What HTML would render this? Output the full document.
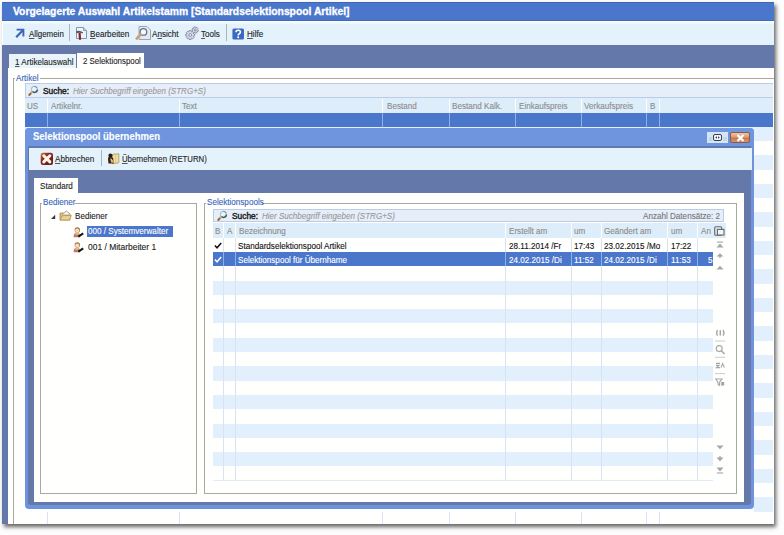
<!DOCTYPE html>
<html><head><meta charset="utf-8"><style>
html,body{margin:0;padding:0;}
body{width:784px;height:535px;overflow:hidden;position:relative;background:#fdfdfd;font-family:"Liberation Sans",sans-serif;}
.a{position:absolute;}
.t{position:absolute;white-space:nowrap;line-height:1;transform-origin:0 0;-webkit-text-stroke:0.12px currentColor;}
u{text-decoration:underline;text-decoration-color:#555;text-underline-offset:1px;}
</style></head><body>
<div class="a" style="left:2px;top:1.6px;width:771.5px;height:522.1px;background:#fffffe;box-shadow:2px 3px 4px rgba(0,0,0,.6);"></div>
<div class="a" style="left:2px;top:1.8px;width:771.5px;height:18.8px;background:#4a77cc;border-top:1px solid #3f66b8;border-bottom:1px solid #4069b8;box-sizing:border-box;"></div>
<div class="t" style="left:13.3px;top:7px;font-size:10px;transform:scaleX(1.032);color:#fff;font-weight:bold;-webkit-text-stroke:0.3px #fff;">Vorgelagerte Auswahl Artikelstamm [Standardselektionspool Artikel]</div>
<div class="a" style="left:2.5px;top:20.6px;width:771.0px;height:24.4px;background:linear-gradient(#fbfdff 0px,#f4fafe 1.5px,#e4f2fc 3.5px);"></div>
<div class="a" style="left:69.4px;top:24px;width:1.0px;height:17px;background:#a9b6c2;"></div>
<div class="a" style="left:226.1px;top:24px;width:1.0px;height:17px;background:#a9b6c2;"></div>
<div class="t" style="left:29.1px;top:30px;font-size:9px;transform:scaleX(0.88);color:#222;"><u>A</u>llgemein</div>
<div class="t" style="left:90.4px;top:30px;font-size:9px;transform:scaleX(0.9);color:#222;"><u>B</u>earbeiten</div>
<div class="t" style="left:152.2px;top:30px;font-size:9px;transform:scaleX(0.9);color:#222;">A<u>n</u>sicht</div>
<div class="t" style="left:200.6px;top:30px;font-size:9px;transform:scaleX(0.9);color:#222;"><u>T</u>ools</div>
<div class="t" style="left:247px;top:30px;font-size:9px;transform:scaleX(0.9);color:#222;"><u>H</u>ilfe</div>
<div class="a" style="left:2px;top:45px;width:771.5px;height:478.7px;background:#6479aa;"></div>
<div class="a" style="left:9.2px;top:54px;width:67.3px;height:14px;background:#e9f4fb;"></div>
<div class="a" style="left:76.5px;top:52.6px;width:67.9px;height:15.4px;background:#fffffe;"></div>
<div class="t" style="left:14.9px;top:58px;font-size:9px;transform:scaleX(0.9);color:#1e1e1e;"><u>1</u> Artikelauswahl</div>
<div class="t" style="left:82.6px;top:57px;font-size:9px;transform:scaleX(0.875);color:#1e1e1e;">2 Selektionspool</div>
<div class="a" style="left:8px;top:67.9px;width:765.5px;height:455.8px;background:#fffffe;"></div>
<div class="a" style="left:13px;top:78.4px;width:760.5px;height:1.0px;background:#aaa89e;"></div>
<div class="a" style="left:13px;top:78.4px;width:1px;height:445.3px;background:#aaa89e;"></div>
<div class="a" style="left:15px;top:73px;width:25px;height:9px;background:#fffffe;"></div>
<div class="t" style="left:16.3px;top:74px;font-size:9px;transform:scaleX(0.9);color:#3a64b8;">Artikel</div>
<div class="a" style="left:24.9px;top:83.4px;width:748.6px;height:14.2px;background:#e6eef9;border:1px solid #bccbe6;border-right:none;box-sizing:border-box;"></div>
<div class="t" style="left:43px;top:87px;font-size:9px;transform:scaleX(0.93);color:#222;-webkit-text-stroke:0.45px #222;">Suche:</div>
<div class="t" style="left:73.3px;top:87px;font-size:9px;transform:scaleX(0.893);color:#999;font-style:italic;">Hier Suchbegriff eingeben (STRG+S)</div>
<div class="a" style="left:24.9px;top:97.5px;width:748.6px;height:15.0px;background:#ddedfa;"></div>
<div class="a" style="left:46.8px;top:98.5px;width:1.0px;height:13.0px;background:#fdfeff;"></div>
<div class="a" style="left:179px;top:98.5px;width:1px;height:13.0px;background:#fdfeff;"></div>
<div class="a" style="left:382.2px;top:98.5px;width:1.0px;height:13.0px;background:#fdfeff;"></div>
<div class="a" style="left:448.5px;top:98.5px;width:1.0px;height:13.0px;background:#fdfeff;"></div>
<div class="a" style="left:514.7px;top:98.5px;width:1.0px;height:13.0px;background:#fdfeff;"></div>
<div class="a" style="left:581.2px;top:98.5px;width:1.0px;height:13.0px;background:#fdfeff;"></div>
<div class="a" style="left:646.3px;top:98.5px;width:1.0px;height:13.0px;background:#fdfeff;"></div>
<div class="a" style="left:659px;top:98.5px;width:1px;height:13.0px;background:#fdfeff;"></div>
<div class="t" style="left:26.9px;top:102px;font-size:9px;transform:scaleX(0.9);color:#8c8c8c;">US</div>
<div class="t" style="left:51.4px;top:102px;font-size:9px;transform:scaleX(0.9);color:#8c8c8c;">Artikelnr.</div>
<div class="t" style="left:182px;top:102px;font-size:9px;transform:scaleX(0.9);color:#8c8c8c;">Text</div>
<div class="t" style="left:386.5px;top:102px;font-size:9px;transform:scaleX(0.9);color:#8c8c8c;">Bestand</div>
<div class="t" style="left:452.3px;top:102px;font-size:9px;transform:scaleX(0.9);color:#8c8c8c;">Bestand Kalk.</div>
<div class="t" style="left:518.5px;top:102px;font-size:9px;transform:scaleX(0.9);color:#8c8c8c;">Einkaufspreis</div>
<div class="t" style="left:584.3px;top:102px;font-size:9px;transform:scaleX(0.9);color:#8c8c8c;">Verkaufspreis</div>
<div class="t" style="left:650px;top:102px;font-size:9px;transform:scaleX(0.9);color:#8c8c8c;">B</div>
<div class="a" style="left:24.9px;top:112.5px;width:748.6px;height:14.25px;background:#4a76cb;"></div>
<div class="a" style="left:24.9px;top:126.75px;width:748.6px;height:14.25px;background:#e2effc;"></div>
<div class="a" style="left:24.9px;top:155.25px;width:748.6px;height:14.25px;background:#e2effc;"></div>
<div class="a" style="left:24.9px;top:183.75px;width:748.6px;height:14.25px;background:#e2effc;"></div>
<div class="a" style="left:24.9px;top:212.25px;width:748.6px;height:14.25px;background:#e2effc;"></div>
<div class="a" style="left:24.9px;top:240.75px;width:748.6px;height:14.25px;background:#e2effc;"></div>
<div class="a" style="left:24.9px;top:269.25px;width:748.6px;height:14.25px;background:#e2effc;"></div>
<div class="a" style="left:24.9px;top:297.75px;width:748.6px;height:14.25px;background:#e2effc;"></div>
<div class="a" style="left:24.9px;top:326.25px;width:748.6px;height:14.25px;background:#e2effc;"></div>
<div class="a" style="left:24.9px;top:354.75px;width:748.6px;height:14.25px;background:#e2effc;"></div>
<div class="a" style="left:24.9px;top:383.25px;width:748.6px;height:14.25px;background:#e2effc;"></div>
<div class="a" style="left:24.9px;top:411.75px;width:748.6px;height:14.25px;background:#e2effc;"></div>
<div class="a" style="left:24.9px;top:440.25px;width:748.6px;height:14.25px;background:#e2effc;"></div>
<div class="a" style="left:24.9px;top:468.75px;width:748.6px;height:14.25px;background:#e2effc;"></div>
<div class="a" style="left:24.9px;top:497.25px;width:748.6px;height:14.25px;background:#e2effc;"></div>
<div class="a" style="left:46.8px;top:112.5px;width:1.0px;height:411.2px;background:#d9e3f6;"></div>
<div class="a" style="left:179px;top:112.5px;width:1px;height:411.2px;background:#d9e3f6;"></div>
<div class="a" style="left:382.2px;top:112.5px;width:1.0px;height:411.2px;background:#d9e3f6;"></div>
<div class="a" style="left:448.5px;top:112.5px;width:1.0px;height:411.2px;background:#d9e3f6;"></div>
<div class="a" style="left:514.7px;top:112.5px;width:1.0px;height:411.2px;background:#d9e3f6;"></div>
<div class="a" style="left:581.2px;top:112.5px;width:1.0px;height:411.2px;background:#d9e3f6;"></div>
<div class="a" style="left:646.3px;top:112.5px;width:1.0px;height:411.2px;background:#d9e3f6;"></div>
<div class="a" style="left:659px;top:112.5px;width:1px;height:411.2px;background:#d9e3f6;"></div>
<div class="a" style="left:46.8px;top:112.5px;width:1.0px;height:14.25px;background:#8fb0e6;"></div>
<div class="a" style="left:179px;top:112.5px;width:1px;height:14.25px;background:#8fb0e6;"></div>
<div class="a" style="left:382.2px;top:112.5px;width:1.0px;height:14.25px;background:#8fb0e6;"></div>
<div class="a" style="left:448.5px;top:112.5px;width:1.0px;height:14.25px;background:#8fb0e6;"></div>
<div class="a" style="left:514.7px;top:112.5px;width:1.0px;height:14.25px;background:#8fb0e6;"></div>
<div class="a" style="left:581.2px;top:112.5px;width:1.0px;height:14.25px;background:#8fb0e6;"></div>
<div class="a" style="left:646.3px;top:112.5px;width:1.0px;height:14.25px;background:#8fb0e6;"></div>
<div class="a" style="left:659px;top:112.5px;width:1px;height:14.25px;background:#8fb0e6;"></div>
<div class="a" style="left:24.7px;top:505px;width:729.7px;height:6.6px;background:#fbfdff;"></div>
<div class="a" style="left:24.7px;top:127.6px;width:729.7px;height:381.2px;background:#6f93da;border-radius:4px;"></div>
<div class="a" style="left:27.5px;top:147px;width:723.5px;height:357.8px;background:#6479aa;border-radius:0 0 3px 3px;"></div>
<div class="a" style="left:24.7px;top:127.6px;width:729.7px;height:19.4px;background:rgba(110,150,222,.93);border-radius:4px 4px 0 0;"></div>
<div class="a" style="left:27.5px;top:146.1px;width:723.5px;height:1.9px;background:#6378b0;"></div>
<div class="t" style="left:33px;top:132px;font-size:10px;transform:scaleX(0.948);color:#fff;font-weight:bold;">Selektionspool übernehmen</div>
<div class="a" style="left:707.3px;top:132px;width:20.6px;height:11.4px;background:#d4e5f7;"></div>
<div class="a" style="left:712.6px;top:134.3px;width:9.8px;height:6.9px;border:1.4px solid #35404e;border-radius:2px;box-sizing:border-box;background:#f2f6fa;"></div>
<svg class="a" style="left:715px;top:136.3px" width="5" height="3" viewBox="0 0 5 3"><path d="M0.2 1.5 L2 0.2 V2.8 Z M4.8 1.5 L3 0.2 V2.8 Z" fill="#35404e"/></svg>
<div class="a" style="left:708.5px;top:136.5px;width:3.5px;height:4.5px;background:#b8d0c8;opacity:.6;"></div>
<div class="a" style="left:723px;top:136.5px;width:3.5px;height:4.5px;background:#b8d0c8;opacity:.6;"></div>
<div class="a" style="left:729.8px;top:132.3px;width:20.7px;height:11.1px;background:linear-gradient(#f2c6a4,#dc9a6c 45%,#c47a4a 60%,#d89470);border:1px solid #8a5a52;border-radius:2px;box-sizing:border-box;"></div>
<svg class="a" style="left:736px;top:134px" width="9" height="8" viewBox="0 0 9 8"><path d="M1.5 1 L7.5 7 M7.5 1 L1.5 7" stroke="#fff" stroke-width="2.2"/></svg>
<div class="a" style="left:29px;top:148.3px;width:722.8px;height:21.7px;background:#e4f2fc;"></div>
<div class="a" style="left:100.9px;top:150px;width:1.0px;height:15.6px;background:#a9b6c2;"></div>
<div class="t" style="left:55.3px;top:155px;font-size:9px;transform:scaleX(0.9);color:#1e1e1e;"><u>A</u>bbrechen</div>
<div class="t" style="left:121.7px;top:155px;font-size:9px;transform:scaleX(0.865);color:#1e1e1e;"><u>Ü</u>bernehmen (RETURN)</div>
<div class="a" style="left:34px;top:178px;width:44px;height:15px;background:#fffffe;"></div>
<div class="t" style="left:39.9px;top:182px;font-size:9px;transform:scaleX(0.9);color:#1e1e1e;">Standard</div>
<div class="a" style="left:33.9px;top:192.9px;width:710.3px;height:309.1px;background:#fffffe;"></div>
<div class="a" style="left:40.2px;top:202.7px;width:156.4px;height:291.3px;border:1px solid #aaa89e;box-sizing:border-box;"></div>
<div class="a" style="left:42px;top:197px;width:33px;height:9px;background:#fffffe;"></div>
<div class="t" style="left:43px;top:198px;font-size:9px;transform:scaleX(0.9);color:#3a64b8;">Bediener</div>
<div class="t" style="left:75px;top:212px;font-size:9px;transform:scaleX(0.9);color:#1e1e1e;">Bediener</div>
<div class="a" style="left:86.8px;top:225.8px;width:86.4px;height:10.8px;background:#4a76cb;"></div>
<div class="t" style="left:88px;top:227px;font-size:9px;transform:scaleX(0.9);color:#fff;">000 / Systemverwalter</div>
<div class="t" style="left:88px;top:243px;font-size:9px;transform:scaleX(0.94);color:#222;">001 / Mitarbeiter 1</div>
<div class="a" style="left:204px;top:202.9px;width:533.2px;height:290.8px;border:1px solid #aaa89e;box-sizing:border-box;"></div>
<div class="a" style="left:206px;top:197px;width:56px;height:9px;background:#fffffe;"></div>
<div class="t" style="left:207px;top:198px;font-size:9px;transform:scaleX(0.9);color:#3a64b8;">Selektionspools</div>
<div class="a" style="left:213.2px;top:208.9px;width:511.3px;height:13.6px;background:#e6eef9;border:1px solid #bccbe6;box-sizing:border-box;"></div>
<div class="t" style="left:231.6px;top:212px;font-size:9px;transform:scaleX(0.93);color:#222;-webkit-text-stroke:0.45px #222;">Suche:</div>
<div class="t" style="left:262px;top:212px;font-size:9px;transform:scaleX(0.893);color:#999;font-style:italic;">Hier Suchbegriff eingeben (STRG+S)</div>
<div class="t" style="left:643px;top:212px;font-size:9px;transform:scaleX(0.9);color:#777;">Anzahl Datensätze: 2</div>
<div class="a" style="left:213.2px;top:222.5px;width:512.8px;height:15.1px;background:#ddedfa;"></div>
<div class="a" style="left:223.3px;top:222.5px;width:1.0px;height:15.1px;background:#fdfeff;"></div>
<div class="a" style="left:235.3px;top:222.5px;width:1.0px;height:15.1px;background:#fdfeff;"></div>
<div class="a" style="left:505.4px;top:222.5px;width:1.0px;height:15.1px;background:#fdfeff;"></div>
<div class="a" style="left:571.4px;top:222.5px;width:1.0px;height:15.1px;background:#fdfeff;"></div>
<div class="a" style="left:601.4px;top:222.5px;width:1.0px;height:15.1px;background:#fdfeff;"></div>
<div class="a" style="left:667.3px;top:222.5px;width:1.0px;height:15.1px;background:#fdfeff;"></div>
<div class="a" style="left:697.4px;top:222.5px;width:1.0px;height:15.1px;background:#fdfeff;"></div>
<div class="t" style="left:214.9px;top:227px;font-size:9px;transform:scaleX(0.9);color:#8c8c8c;">B</div>
<div class="t" style="left:227.1px;top:227px;font-size:9px;transform:scaleX(0.9);color:#8c8c8c;">A</div>
<div class="t" style="left:238.8px;top:227px;font-size:9px;transform:scaleX(0.9);color:#8c8c8c;">Bezeichnung</div>
<div class="t" style="left:508.6px;top:227px;font-size:9px;transform:scaleX(0.9);color:#8c8c8c;">Erstellt am</div>
<div class="t" style="left:574.3px;top:227px;font-size:9px;transform:scaleX(0.9);color:#8c8c8c;">um</div>
<div class="t" style="left:604px;top:227px;font-size:9px;transform:scaleX(0.9);color:#8c8c8c;">Geändert am</div>
<div class="t" style="left:670.6px;top:227px;font-size:9px;transform:scaleX(0.9);color:#8c8c8c;">um</div>
<div class="t" style="left:701.3px;top:227px;font-size:9px;transform:scaleX(0.9);color:#8c8c8c;">An</div>
<div class="a" style="left:213.2px;top:251.9px;width:500.0px;height:14.3px;background:#4a76cb;"></div>
<div class="a" style="left:213.2px;top:280.5px;width:500.0px;height:14.3px;background:#e2effc;"></div>
<div class="a" style="left:213.2px;top:309.1px;width:500.0px;height:14.3px;background:#e2effc;"></div>
<div class="a" style="left:213.2px;top:337.7px;width:500.0px;height:14.3px;background:#e2effc;"></div>
<div class="a" style="left:213.2px;top:366.3px;width:500.0px;height:14.3px;background:#e2effc;"></div>
<div class="a" style="left:213.2px;top:394.9px;width:500.0px;height:14.3px;background:#e2effc;"></div>
<div class="a" style="left:213.2px;top:423.5px;width:500.0px;height:14.3px;background:#e2effc;"></div>
<div class="a" style="left:213.2px;top:452.1px;width:500.0px;height:14.3px;background:#e2effc;"></div>
<div class="a" style="left:223.3px;top:237.6px;width:1.0px;height:243.1px;background:#d9e3f6;"></div>
<div class="a" style="left:235.3px;top:237.6px;width:1.0px;height:243.1px;background:#d9e3f6;"></div>
<div class="a" style="left:505.4px;top:237.6px;width:1.0px;height:243.1px;background:#d9e3f6;"></div>
<div class="a" style="left:571.4px;top:237.6px;width:1.0px;height:243.1px;background:#d9e3f6;"></div>
<div class="a" style="left:601.4px;top:237.6px;width:1.0px;height:243.1px;background:#d9e3f6;"></div>
<div class="a" style="left:667.3px;top:237.6px;width:1.0px;height:243.1px;background:#d9e3f6;"></div>
<div class="a" style="left:697.4px;top:237.6px;width:1.0px;height:243.1px;background:#d9e3f6;"></div>
<div class="a" style="left:223.3px;top:251.9px;width:1.0px;height:14.3px;background:#8fb0e6;"></div>
<div class="a" style="left:235.3px;top:251.9px;width:1.0px;height:14.3px;background:#8fb0e6;"></div>
<div class="a" style="left:505.4px;top:251.9px;width:1.0px;height:14.3px;background:#8fb0e6;"></div>
<div class="a" style="left:571.4px;top:251.9px;width:1.0px;height:14.3px;background:#8fb0e6;"></div>
<div class="a" style="left:601.4px;top:251.9px;width:1.0px;height:14.3px;background:#8fb0e6;"></div>
<div class="a" style="left:667.3px;top:251.9px;width:1.0px;height:14.3px;background:#8fb0e6;"></div>
<div class="a" style="left:697.4px;top:251.9px;width:1.0px;height:14.3px;background:#8fb0e6;"></div>
<div class="a" style="left:213.2px;top:480.1px;width:500.0px;height:1.0px;background:#e4eaf6;"></div>
<div class="t" style="left:237.7px;top:242px;font-size:9px;transform:scaleX(0.9);color:#111;">Standardselektionspool Artikel</div>
<div class="t" style="left:508.6px;top:242px;font-size:9px;transform:scaleX(0.9);color:#111;">28.11.2014 /Fr</div>
<div class="t" style="left:574.3px;top:242px;font-size:9px;transform:scaleX(0.9);color:#111;">17:43</div>
<div class="t" style="left:604px;top:242px;font-size:9px;transform:scaleX(0.9);color:#111;">23.02.2015 /Mo</div>
<div class="t" style="left:670.6px;top:242px;font-size:9px;transform:scaleX(0.9);color:#111;">17:22</div>
<div class="t" style="left:237.7px;top:256px;font-size:9px;transform:scaleX(0.9);color:#fff;">Selektionspool für Übernhame</div>
<div class="t" style="left:508.6px;top:256px;font-size:9px;transform:scaleX(0.9);color:#fff;">24.02.2015 /Di</div>
<div class="t" style="left:574.3px;top:256px;font-size:9px;transform:scaleX(0.9);color:#fff;">11:52</div>
<div class="t" style="left:604px;top:256px;font-size:9px;transform:scaleX(0.9);color:#fff;">24.02.2015 /Di</div>
<div class="t" style="left:670.6px;top:256px;font-size:9px;transform:scaleX(0.9);color:#fff;">11:53</div>
<div class="t" style="left:707.6px;top:256px;font-size:9px;transform:scaleX(0.9);color:#fff;">5</div>
<svg class="a" style="left:14px;top:28px" width="11" height="11" viewBox="0 0 11 11"><path d="M2.2 9.2 L8.6 2.6" stroke="#3b63ba" stroke-width="2.2" fill="none"/><path d="M2.6 1.6 H9.4 V8.6" stroke="#3b63ba" stroke-width="1.9" fill="none"/></svg>
<svg class="a" style="left:74px;top:26px" width="14" height="15" viewBox="0 0 14 15"><path d="M2.5 1.5 H9.5 L12.5 4.5 V12.5 H2.5 Z" fill="#eef2fa" stroke="#8594ab" stroke-width="1"/><path d="M9.5 1.5 V4.5 H12.5" fill="#c5cfdd" stroke="#8594ab" stroke-width="0.8"/><path d="M2.2 5.2 Q5.5 3.8 9 6.2 L8.6 7.4 Q6 6.2 2.4 7.2 Z" fill="#505a66"/><path d="M5.6 7 L6 13.8" stroke="#8a1e22" stroke-width="2.2"/></svg>
<svg class="a" style="left:134px;top:25px" width="18" height="16" viewBox="0 0 18 16"><path d="M5 1.5 H13 L16.5 5 V14.5 H5 Z" fill="#e3e9f3" stroke="#9aa6b8" stroke-width="1"/><circle cx="9.4" cy="6.9" r="3.3" fill="#f4f8ff" stroke="#6a7280" stroke-width="1.3"/><path d="M2.8 13.4 L6.4 9.8" stroke="#caa27a" stroke-width="2.8" stroke-linecap="round"/></svg>
<svg class="a" style="left:184px;top:25px" width="16" height="16" viewBox="0 0 16 16"><path d="M9.36 8.75 L10.71 9.08 L10.71 10.92 L9.36 11.25 L9.32 11.35 L10.04 12.54 L8.74 13.84 L7.55 13.12 L7.45 13.16 L7.12 14.51 L5.28 14.51 L4.95 13.16 L4.85 13.12 L3.66 13.84 L2.36 12.54 L3.08 11.35 L3.04 11.25 L1.69 10.92 L1.69 9.08 L3.04 8.75 L3.08 8.65 L2.36 7.46 L3.66 6.16 L4.85 6.88 L4.95 6.84 L5.28 5.49 L7.12 5.49 L7.45 6.84 L7.55 6.88 L8.74 6.16 L10.04 7.46 L9.32 8.65 Z M7.6 10 A1.4 1.4 0 1 0 4.8 10 A1.4 1.4 0 1 0 7.6 10 Z" fill="#d5d6ea" stroke="#7d8098" stroke-width="0.8" fill-rule="evenodd"/><path d="M13.45 4.54 L14.40 5.10 L13.90 6.72 L12.80 6.65 L12.73 6.72 L12.71 7.82 L11.06 8.20 L10.57 7.21 L10.47 7.18 L9.51 7.72 L8.36 6.48 L8.97 5.56 L8.95 5.46 L8.00 4.90 L8.50 3.28 L9.60 3.35 L9.67 3.28 L9.69 2.18 L11.34 1.80 L11.83 2.79 L11.93 2.82 L12.89 2.28 L14.04 3.52 L13.43 4.44 Z M12.2 5 A1 1 0 1 0 10.2 5 A1 1 0 1 0 12.2 5 Z" fill="#d9dbee" stroke="#7d8098" stroke-width="0.8" fill-rule="evenodd"/></svg>
<svg class="a" style="left:232px;top:27.5px" width="12.5" height="12" viewBox="0 0 12.5 12"><rect x="0.4" y="0.4" width="11.6" height="11" rx="1.5" fill="#3e69c1"/><path d="M4 4.2 Q4 2.2 6.2 2.2 Q8.4 2.2 8.4 4.1 Q8.4 5.3 7 6 Q6.2 6.4 6.2 7.6" stroke="#fff" stroke-width="1.6" fill="none"/><rect x="5.3" y="8.4" width="1.8" height="1.7" fill="#fff"/></svg>
<svg class="a" style="left:27px;top:83.6px" width="12" height="13" viewBox="0 0 12 13"><circle cx="7.4" cy="5.4" r="3" fill="#e2f6fc" stroke="#a8c4d4" stroke-width="1.1"/><path d="M10.4 5.4 A3 3 0 0 1 5.3 7.5" stroke="#4a525c" stroke-width="1.5" fill="none"/><path d="M10.1 4 A3 3 0 0 0 7.4 2.4" stroke="#7a8896" stroke-width="1" fill="none"/><path d="M2.2 10.8 L4.6 8.4" stroke="#c8ae7a" stroke-width="2.4" stroke-linecap="round"/><path d="M2.4 11 L3.6 9.8" stroke="#8a5a4a" stroke-width="1.6" stroke-linecap="round"/></svg>
<svg class="a" style="left:215.5px;top:209.4px" width="12" height="13" viewBox="0 0 12 13"><circle cx="7.4" cy="5.4" r="3" fill="#e2f6fc" stroke="#a8c4d4" stroke-width="1.1"/><path d="M10.4 5.4 A3 3 0 0 1 5.3 7.5" stroke="#4a525c" stroke-width="1.5" fill="none"/><path d="M10.1 4 A3 3 0 0 0 7.4 2.4" stroke="#7a8896" stroke-width="1" fill="none"/><path d="M2.2 10.8 L4.6 8.4" stroke="#c8ae7a" stroke-width="2.4" stroke-linecap="round"/><path d="M2.4 11 L3.6 9.8" stroke="#8a5a4a" stroke-width="1.6" stroke-linecap="round"/></svg>
<svg class="a" style="left:39.5px;top:151.5px" width="14" height="14" viewBox="0 0 14 14"><defs><linearGradient id="xg" x1="0" y1="0" x2="1" y2="1"><stop offset="0" stop-color="#c8864c"/><stop offset="0.35" stop-color="#8a2a22"/><stop offset="1" stop-color="#6e1016"/></linearGradient></defs><rect x="0.7" y="0.7" width="12.3" height="12.3" rx="2.2" fill="url(#xg)"/><path d="M3.8 3.8 L9.9 9.9 M9.9 3.8 L3.8 9.9" stroke="#fff6ea" stroke-width="3" stroke-linecap="round"/></svg>
<svg class="a" style="left:106.5px;top:153px" width="13" height="12" viewBox="0 0 13 12"><path d="M5.4 1.4 L11.8 0.8 V9.8 L5.4 10.8 Z" fill="#f2dda2" stroke="#b59a62" stroke-width="0.9"/><path d="M8.6 1.2 V10.3" stroke="#d8c080" stroke-width="0.7"/><circle cx="3.4" cy="2.4" r="2" fill="#2c1a10"/><path d="M1 5 Q1.2 3.8 3.4 3.8 Q5.6 3.8 6.2 5.4 L6.6 10.6 H1.4 Z" fill="#3a2216"/><path d="M3.2 5.6 Q4.6 5.4 5.6 7 L6.4 9.4 L4.4 9.8 Z" fill="#e9c27c"/></svg>
<svg class="a" style="left:50px;top:213.5px" width="6" height="6" viewBox="0 0 6 6"><path d="M5.2 0.8 V5 H1 Z" fill="#333"/></svg>
<svg class="a" style="left:58.5px;top:209.5px" width="13" height="11" viewBox="0 0 13 11"><path d="M1 3 H4.5 L5.5 4 H11 V10 H1 Z" fill="#d9bf7a" stroke="#a8905c" stroke-width="0.8"/><path d="M3 4.5 L7.5 1 L11.5 4.5" fill="#f8f8f8" stroke="#8a8a8a" stroke-width="0.8"/><path d="M1 10 L3.4 5.6 H12.4 L10.4 10 Z" fill="#ecd38a" stroke="#a8905c" stroke-width="0.8"/></svg>
<svg class="a" style="left:72.8px;top:226.5px" width="11" height="11" viewBox="0 0 11 11"><circle cx="4.3" cy="3" r="2.7" fill="#a86a4c"/><circle cx="4.2" cy="3.6" r="2.1" fill="#f4e1aa"/><path d="M0.6 10.2 Q0.4 5.8 4 5.8 Q6.8 5.8 7 8.4 V10.2 Z" fill="#c07868"/><path d="M1.6 7.6 Q2.2 5.9 4 5.9 Q5.8 5.9 6.2 7.4 Z" fill="#ecd49a"/><path d="M5.4 9.6 L10.2 6.4" stroke="#151515" stroke-width="2"/></svg>
<svg class="a" style="left:72.8px;top:241.8px" width="11" height="11" viewBox="0 0 11 11"><circle cx="4.3" cy="3" r="2.7" fill="#a86a4c"/><circle cx="4.2" cy="3.6" r="2.1" fill="#f4e1aa"/><path d="M0.6 10.2 Q0.4 5.8 4 5.8 Q6.8 5.8 7 8.4 V10.2 Z" fill="#c07868"/><path d="M1.6 7.6 Q2.2 5.9 4 5.9 Q5.8 5.9 6.2 7.4 Z" fill="#ecd49a"/><path d="M5.4 9.6 L10.2 6.4" stroke="#151515" stroke-width="2"/></svg>
<svg class="a" style="left:214px;top:242px" width="8" height="7" viewBox="0 0 8 7"><path d="M0.9 3.6 L3 5.8 L7.2 1" stroke="#111" stroke-width="1.5" fill="none"/></svg>
<svg class="a" style="left:214px;top:256.3px" width="8" height="7" viewBox="0 0 8 7"><path d="M0.9 3.6 L3 5.8 L7.2 1" stroke="#fff" stroke-width="1.5" fill="none"/></svg>
<svg class="a" style="left:713.5px;top:226px" width="11" height="10" viewBox="0 0 11 10"><rect x="0.7" y="0.7" width="7" height="8.5" rx="1" fill="none" stroke="#666" stroke-width="1.1"/><rect x="3.4" y="3.4" width="6.6" height="5.6" fill="#f4f4f4" stroke="#666" stroke-width="1.1"/></svg>
<svg class="a" style="left:715.5px;top:240.5px" width="8" height="7" viewBox="0 0 8 7"><rect x="1" y="0.5" width="6" height="1.1" fill="#a6a6a6"/><path d="M0.5 6.4 L4 2.6 L7.5 6.4 Z" fill="#a6a6a6"/></svg>
<svg class="a" style="left:715.5px;top:253px" width="8" height="5" viewBox="0 0 8 5"><path d="M0.5 3.6 L4 0.2 L7.5 3.6 Z" fill="#a6a6a6"/><rect x="3.2" y="3" width="1.6" height="1.8" fill="#a6a6a6"/></svg>
<svg class="a" style="left:715.5px;top:264.5px" width="8" height="5" viewBox="0 0 8 5"><path d="M0.5 4.4 L4 0.8 L7.5 4.4 Z" fill="#a6a6a6"/></svg>
<svg class="a" style="left:715px;top:329px" width="11" height="58" viewBox="0 0 11 58"><g fill="none" stroke="#a6a6a6" stroke-width="1.1"><path d="M2.4 1 Q0.9 3.8 2.4 6.6 M8.2 1 Q9.7 3.8 8.2 6.6 M5.3 1.2 V6.4" stroke-width="1.5"/><path d="M0 12 H10" stroke="#cfcfcf"/><circle cx="4.2" cy="19.6" r="3"/><path d="M6.4 21.8 L9.6 25" stroke-width="1.5"/><path d="M0 28.3 H10" stroke="#cfcfcf"/><path d="M1 34.4 H5 M1 36.4 H4 L1.5 38.6 H5 M6 38.6 L7.6 34.6 L9.4 38.6"/><path d="M0 44.6 H10" stroke="#cfcfcf"/><path d="M0.6 50 H7 L4.6 53.2 V56.4 L3 55.2 V53.2 Z"/><rect x="6.2" y="53" width="3" height="3.6" fill="#a6a6a6" stroke="none"/></g></svg>
<svg class="a" style="left:715.5px;top:444.8px" width="8" height="5" viewBox="0 0 8 5"><path d="M0.5 0.4 L4 4.2 L7.5 0.4 Z" fill="#a6a6a6"/></svg>
<svg class="a" style="left:715.5px;top:455.6px" width="8" height="6" viewBox="0 0 8 6"><rect x="3.2" y="0.2" width="1.6" height="2" fill="#a6a6a6"/><path d="M0.5 1.6 L4 5.2 L7.5 1.6 Z" fill="#a6a6a6"/></svg>
<svg class="a" style="left:715.5px;top:466.8px" width="8" height="7" viewBox="0 0 8 7"><path d="M0.5 0.6 L4 4.4 L7.5 0.6 Z" fill="#a6a6a6"/><rect x="1" y="5.4" width="6" height="1.1" fill="#a6a6a6"/></svg>
</body></html>
